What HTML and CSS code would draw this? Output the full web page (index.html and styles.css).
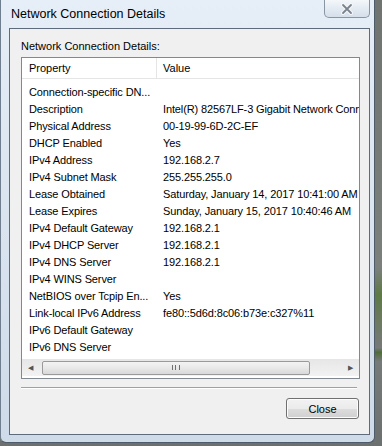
FILE: index.html
```html
<!DOCTYPE html>
<html lang="en">

<head>
    <meta charset="utf-8">
    <title>Network Connection Details</title>
    <link rel="stylesheet" href="styles.css">
</head>

<body>

    <div class="window">
        <div class="titlebar">
            <div class="title">Network Connection Details</div>
            <div class="close-x">
                <svg width="20" height="12" viewBox="0 0 20 12">
                    <path d="M6 2 L14 10 M14 2 L6 10" stroke="#f4f6f8" stroke-width="4" stroke-linecap="round" />
                    <path d="M6 2 L14 10 M14 2 L6 10" stroke="#7a838d" stroke-width="1.8" stroke-linecap="round" />
                </svg>
            </div>
        </div>

        <div class="client">
            <div class="label">Network Connection Details:</div>

            <div class="list">
                <div class="list-head">
                    <div class="col-prop">Property</div>
                    <div class="col-val">Value</div>
                </div>
                <div class="rows">
                    <div class="row"><span>Connection-specific DN...</span><span></span></div>
                    <div class="row"><span>Description</span><span>Intel(R) 82567LF-3 Gigabit Network Conn</span></div>
                    <div class="row"><span>Physical Address</span><span>00-19-99-6D-2C-EF</span></div>
                    <div class="row"><span>DHCP Enabled</span><span>Yes</span></div>
                    <div class="row"><span>IPv4 Address</span><span>192.168.2.7</span></div>
                    <div class="row"><span>IPv4 Subnet Mask</span><span>255.255.255.0</span></div>
                    <div class="row"><span>Lease Obtained</span><span>Saturday, January 14, 2017 10:41:00 AM</span></div>
                    <div class="row"><span>Lease Expires</span><span>Sunday, January 15, 2017 10:40:46 AM</span></div>
                    <div class="row"><span>IPv4 Default Gateway</span><span>192.168.2.1</span></div>
                    <div class="row"><span>IPv4 DHCP Server</span><span>192.168.2.1</span></div>
                    <div class="row"><span>IPv4 DNS Server</span><span>192.168.2.1</span></div>
                    <div class="row"><span>IPv4 WINS Server</span><span></span></div>
                    <div class="row"><span>NetBIOS over Tcpip En...</span><span>Yes</span></div>
                    <div class="row"><span>Link-local IPv6 Address</span><span>fe80::5d6d:8c06:b73e:c327%11</span></div>
                    <div class="row"><span>IPv6 Default Gateway</span><span></span></div>
                    <div class="row"><span>IPv6 DNS Server</span><span></span></div>
                </div>
                <div class="hscroll">
                    <div class="arrow">&#9664;</div>
                    <div class="thumb"><span class="grip"></span></div>
                    <div class="arrow">&#9654;</div>
                </div>
            </div>

            <div class="separator"></div>

            <div class="buttons">
                <button class="btn">Close</button>
            </div>
        </div>
    </div>

</body>

</html>
```

FILE: styles.css
```css
body {
    margin: 0;
    width: 382px;
    height: 446px;
    overflow: hidden;
    background: linear-gradient(180deg, #6f7471 0%, #7b807d 60%, #5e7a45 66%, #6d7a60 72%, #77797a 78%, #4f6d3a 79%, #767a78 81%, #6c706e 100%);
    font-family: "Liberation Sans", Arial, sans-serif;
    font-size: 11px;
    color: #000;
}

.window {
    width: 375px;
    height: 443px;
    box-sizing: border-box;
    border-left: 1px solid #6f7f90;
    border-right: 1px solid #4e5c6a;
    border-bottom: 1px solid #4e5c6a;
    border-radius: 0 0 6px 6px;
    background: linear-gradient(180deg, #e6eef7 0%, #dbe6f1 40%, #cfdbe8 100%);
    display: flex;
    flex-direction: column;
}

.titlebar {
    height: 28px;
    display: flex;
    align-items: flex-start;
}

.title {
    padding: 7px 0 0 10px;
    font-size: 12.5px;
    color: #000;
}

.close-x {
    margin-left: auto;
    margin-right: 4px;
    width: 46px;
    height: 18px;
    box-sizing: border-box;
    border: 1px solid #8995a3;
    border-top: none;
    border-radius: 0 0 5px 5px;
    background: linear-gradient(180deg, #f4f7fa 0%, #e3eaf2 50%, #d5dfea 100%);
    display: flex;
    justify-content: center;
    align-items: center;
}

.client {
    margin: 0 4px 7px 8px;
    flex: 1;
    border: 1px solid #5d6b7a;
    background: #f0f0f0;
    padding: 10px 10px 0 11px;
    display: flex;
    flex-direction: column;
}

.label {
    height: 18px;
    line-height: 14px;
}

.list {
    width: 339px;
    height: 322px;
    box-sizing: border-box;
    border: 1px solid #828790;
    background: #fff;
    display: flex;
    flex-direction: column;
    overflow: hidden;
}

.list-head {
    display: flex;
    height: 20px;
    line-height: 20px;
    border-bottom: 1px solid #e5e5e5;
}

.col-prop {
    width: 127px;
    padding-left: 7px;
    border-right: 1px solid #e5e5e5;
}

.col-val {
    padding-left: 6px;
}

.rows {
    flex: 1;
    padding-top: 5px;
    letter-spacing: -0.12px;
}

.row {
    display: flex;
    height: 17px;
    line-height: 17px;
    white-space: nowrap;
}

.row span:first-child {
    width: 128px;
    flex: none;
    padding-left: 7px;
}

.row span:last-child {
    padding-left: 6px;
}

.hscroll {
    height: 17px;
    margin-bottom: 2px;
    display: flex;
    align-items: center;
    background: linear-gradient(180deg, #e6e6e6, #f2f2f2);
}

.arrow {
    width: 17px;
    text-align: center;
    font-size: 7px;
    color: #555;
}

.thumb {
    width: 268px;
    height: 14px;
    margin: 0 auto 0 3px;
    box-sizing: border-box;
    border: 1px solid #9a9a9a;
    border-radius: 2px;
    background: linear-gradient(180deg, #f3f3f3 0%, #e8e8e8 50%, #d8d8d8 100%);
    display: flex;
    justify-content: center;
    align-items: center;
}

.grip {
    width: 6px;
    height: 5px;
    border-left: 1px solid #6f6f6f;
    border-right: 1px solid #6f6f6f;
    position: relative;
}

.grip::after {
    content: "";
    position: absolute;
    left: 2px;
    top: 0;
    width: 1px;
    height: 5px;
    background: #6f6f6f;
}

.separator {
    margin: 8px 2px 0 0;
    height: 1px;
    background: #a0a0a0;
    border-bottom: 1px solid #fff;
}

.buttons {
    display: flex;
    justify-content: flex-end;
    padding-top: 9px;
}

.btn {
    width: 73px;
    height: 21px;
    font-family: "Liberation Sans", Arial, sans-serif;
    font-size: 11px;
    color: #000;
    border: 1px solid #707070;
    border-radius: 3px;
    background: linear-gradient(180deg, #f2f2f2 0%, #ebebeb 50%, #dddddd 51%, #cfcfcf 100%);
    box-shadow: inset 0 0 0 1px #fcfcfc;
    padding: 0;
}
```
